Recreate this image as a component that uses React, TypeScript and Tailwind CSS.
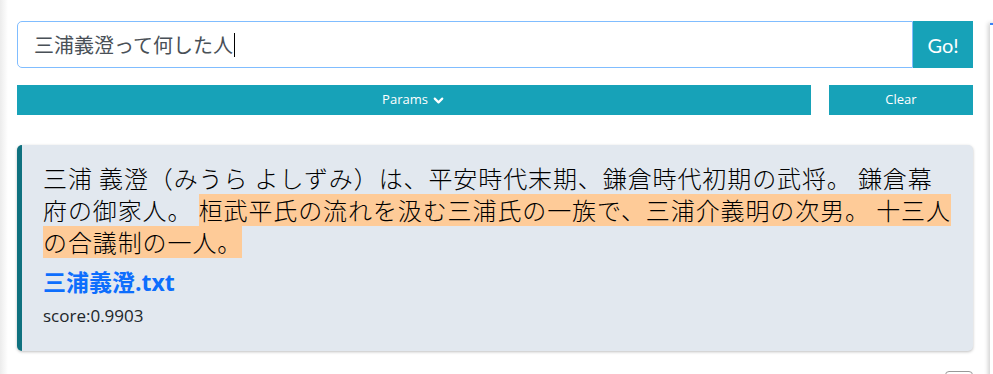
import { ChevronDown } from "lucide-react";

const latin = { fontFamily: "Lato, 'Noto Sans CJK JP', sans-serif" };

export default function App() {
    return (
        <div
            className="relative min-h-screen bg-white overflow-hidden text-[#212529]"
            style={latin}
        >
            {/* side shadows from neighbouring panels */}
            <div className="absolute left-0 top-0 bottom-0 w-[8px] bg-linear-to-r from-[#ececec] to-white" />
            <div className="absolute left-[990px] top-[23px] bottom-0 w-[12px] bg-white border-t-2 border-[#3b82f6] shadow-[-2px_0_4px_rgba(0,0,0,0.18)]" />

            <div className="pl-[17px] pr-[20px] pt-[21px]">
                {/* ── Search bar ─────────────────────────────── */}
                <div className="flex h-[47px]">
                    <div className="flex-1 flex items-center border border-[#80bdff] rounded-l-[5px] pl-[16px] text-[20px] text-[#495057] font-['Noto_Sans_CJK_JP',sans-serif]">
                        <span>三浦義澄って何した人</span>
                        <span className="inline-block w-px h-[24px] bg-black ml-px" />
                    </div>
                    <button className="w-[60px] bg-[#17a2b8] text-white text-[20px]">
                        Go!
                    </button>
                </div>

                {/* ── Actions ────────────────────────────────── */}
                <div className="mt-[17px] flex gap-[18px] h-[30px] font-['Open_Sans',sans-serif]">
                    <button className="flex-1 flex items-center justify-center gap-[3px] bg-[#17a2b8] text-white text-[13px] font-medium">
                        Params
                        <ChevronDown size={15} strokeWidth={3.5} />
                    </button>
                    <button className="w-[144px] bg-[#17a2b8] text-white text-[13px] font-medium">
                        Clear
                    </button>
                </div>

                {/* ── Result card ────────────────────────────── */}
                <div className="mt-[30px] rounded-[5px] border-l-[5px] border-[#0f717f] bg-[#e2e8ef] pl-[21px] pr-[18px] pt-[17px] pb-[23px] shadow-[0_1px_3px_rgba(0,0,0,0.25)]">
                    <p className="text-[24px] leading-[32px] tracking-[0.9px] text-black font-['Noto_Sans_CJK_JP',sans-serif] font-light">
                        三浦 義澄（みうら よしずみ）は、平安時代末期、鎌倉時代初期の武将。 鎌倉幕
                        <br />
                        府の御家人。{" "}
                        <span className="inline-block h-[32px] bg-[#fecb98]">
                            桓武平氏の流れを汲む三浦氏の一族で、三浦介義明の次男。 十三人
                        </span>
                        <br />
                        <span className="inline-block h-[32px] bg-[#fecb98]">
                            の合議制の一人。
                        </span>
                    </p>
                    <a
                        href="#"
                        className="block mt-[9px] text-[23px] leading-[30px] font-bold text-[#0d6efd] font-['Open_Sans','Noto_Sans_CJK_JP',sans-serif]"
                    >
                        三浦義澄.txt
                    </a>
                    <p className="mt-[7px] text-[17px] leading-[24px] text-[#212529] font-['Open_Sans',sans-serif]">
                        score:0.9903
                    </p>
                </div>

                <div className="mt-[20px] flex justify-end">
                    <div className="w-[28px] h-[20px] rounded-[4px] border border-[#999]" />
                </div>
            </div>
        </div>
    );
}
